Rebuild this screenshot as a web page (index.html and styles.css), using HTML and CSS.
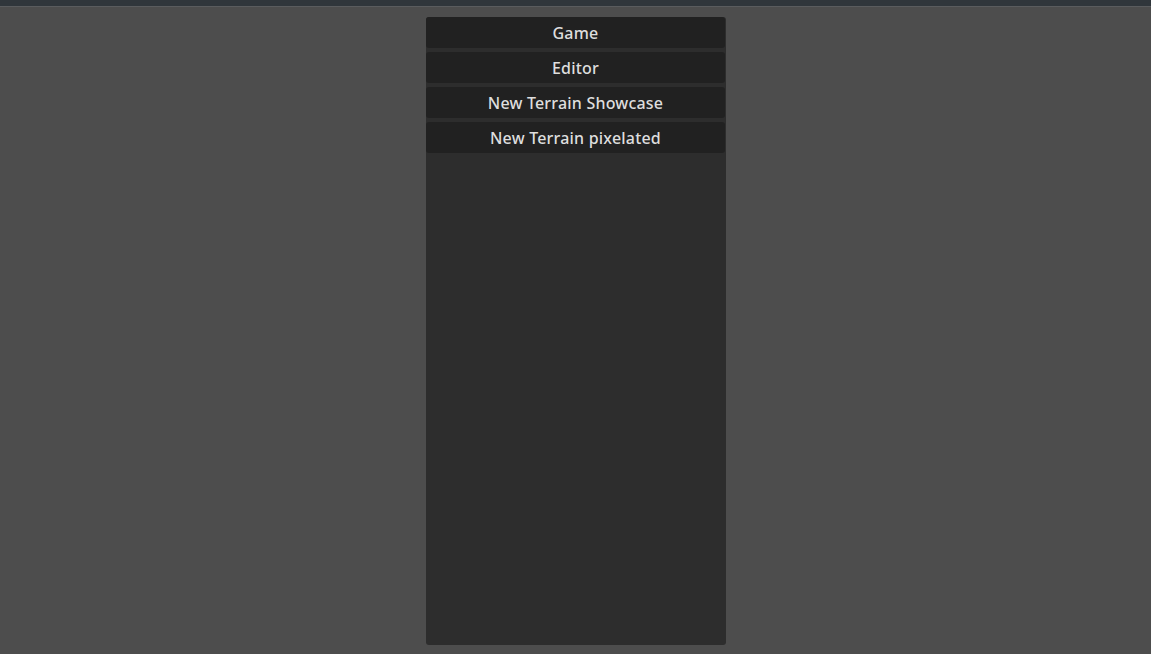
FILE: index.html
```html
<!DOCTYPE html>
<html>
<head>
<meta charset="utf-8">
<link rel="stylesheet" href="styles.css">
</head>
<body>
<div class="topbar"></div>
<main class="stage">
  <div class="panel">
    <button class="item">Game</button>
    <button class="item">Editor</button>
    <button class="item">New Terrain Showcase</button>
    <button class="item">New Terrain pixelated</button>
  </div>
</main>
</body>
</html>
```
FILE: styles.css
```css
html, body {
  margin: 0;
  padding: 0;
  background: #4d4d4d;
  height: 100%;
  overflow: hidden;
}
.topbar {
  height: 6px;
  background: #30363b;
  border-bottom: 1px solid #5a5c5e;
}
.stage {
  display: flex;
  justify-content: center;
  padding-top: 10px;
}
.panel {
  width: 300px;
  height: 628px;
  margin-left: 1px;
  background: #2d2d2d;
  border-radius: 3px;
  display: flex;
  flex-direction: column;
  gap: 4px;
}
.item {
  height: 31px;
  width: 299px;
  border: none;
  border-radius: 3px;
  background: #212121;
  color: #dedede;
  font-family: "Noto Sans", "Open Sans", sans-serif;
  font-size: 16px;
  font-weight: 500;
  letter-spacing: 0.2px;
  padding: 2px 0 0;
  line-height: 29px;
  text-align: center;
  cursor: pointer;
}
```
